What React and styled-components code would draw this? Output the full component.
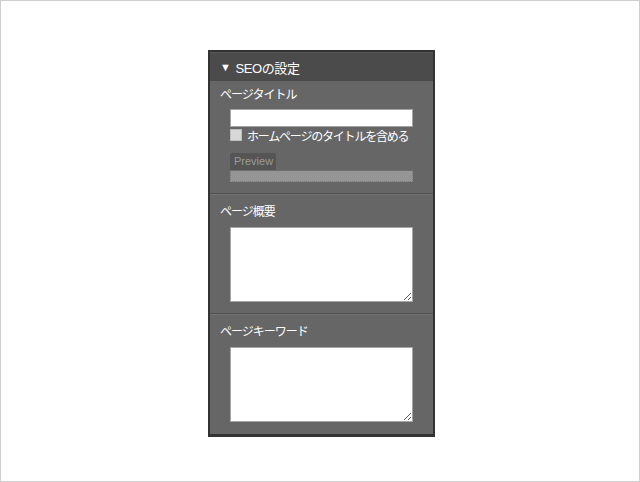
import React from "react";
import styled, { createGlobalStyle } from "styled-components";

const Global = createGlobalStyle`
  html, body { margin: 0; padding: 0; background: #fff; }
  * { box-sizing: border-box; }
`;

const Page = styled.div`
  width: 640px;
  height: 482px;
  border: 1px solid #cfcfcf;
  padding: 49px 0 0 207px;
  font-family: "Liberation Sans", "Noto Sans CJK JP", sans-serif;
`;

const Panel = styled.div`
  width: 227px;
  border: 2px solid #333;
  border-bottom-width: 3px;
  background: #666;
`;

const Header = styled.div`
  height: 29px;
  background: #4b4b4b;
  border-top: 1px solid #565656;
  display: flex;
  align-items: center;
  gap: 5px;
  padding-left: 10px;
  color: #fff;
  font-size: 13px;
  letter-spacing: -0.4px;
`;

const Tri = styled.span`
  font-size: 11px;
  line-height: 1;
`;

const Section = styled.div`
  padding: ${(p) => p.$top}px 20px ${(p) => p.$bottom ?? 11}px 20px;
  & + & {
    border-top: 1px solid #505050;
    box-shadow: inset 0 1px 0 #717171;
  }
`;

const Label = styled.div`
  margin-left: -10px;
  height: 16px;
  line-height: 16px;
  color: #fff;
  font-size: 12px;
  letter-spacing: -1px;
  margin-bottom: ${(p) => p.$gap}px;
`;

const TextInput = styled.input`
  display: block;
  width: 183px;
  height: 18px;
  margin: 0;
  border: 1px solid #a5a5a5;
  background: #fff;
  padding: 0 2px;
  outline: none;
`;

const CheckRow = styled.label`
  display: flex;
  align-items: center;
  gap: 5px;
  height: 14px;
  margin-top: 1px;
  color: #fff;
  font-size: 12px;
  letter-spacing: -1.2px;
  white-space: nowrap;
`;

const Box = styled.span`
  width: 12px;
  height: 12px;
  background: #d8d8d8;
  border: 1px solid #bdbdbd;
  flex: none;
`;

const PreviewTab = styled.div`
  margin-top: 11px;
  width: 46px;
  height: 17px;
  background: #555;
  border-radius: 2px 2px 0 0;
  color: #9a9a9a;
  font-size: 11px;
  line-height: 17px;
  padding-left: 4px;
`;

const PreviewBar = styled.div`
  width: 183px;
  height: 12px;
  background: #959595;
  border: 1px dotted #7a7a7a;
  border-top: 1px solid #6e6e6e;
`;

const Area = styled.textarea`
  display: block;
  width: 183px;
  height: 75px;
  margin: 0;
  border: 1px solid #a5a5a5;
  background: #fff;
  outline: none;
  resize: both;
  font-family: inherit;
`;

export default function App() {
  return (
    <>
      <Global />
      <Page>
        <Panel>
          <Header>
            <Tri>▼</Tri>
            <span>SEOの設定</span>
          </Header>
          <Section $top={6}>
            <Label $gap={6}>ページタイトル</Label>
            <TextInput type="text" />
            <CheckRow>
              <Box />
              ホームページのタイトルを含める
            </CheckRow>
            <PreviewTab>Preview</PreviewTab>
            <PreviewBar />
          </Section>
          <Section $top={10}>
            <Label $gap={7}>ページ概要</Label>
            <Area />
          </Section>
          <Section $top={10} $bottom={12}>
            <Label $gap={7}>ページキーワード</Label>
            <Area />
          </Section>
        </Panel>
      </Page>
    </>
  );
}
